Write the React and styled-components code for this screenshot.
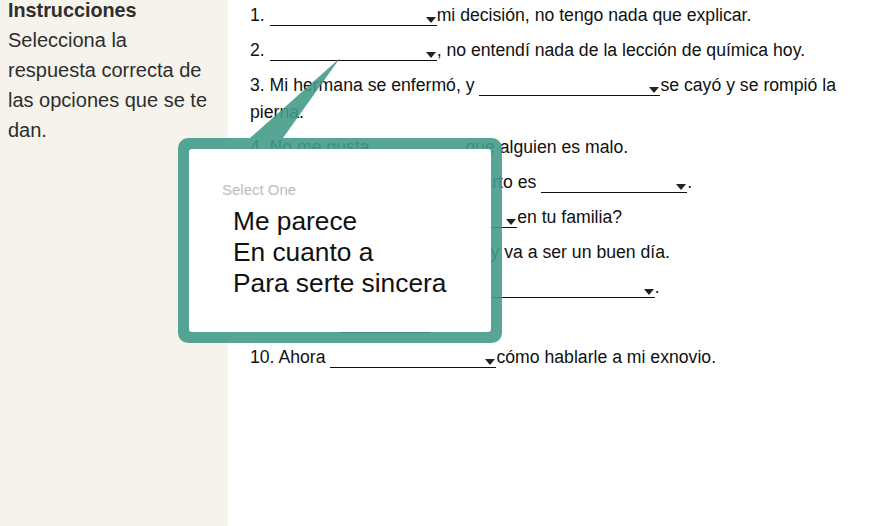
import styled, { createGlobalStyle } from "styled-components";

const GlobalStyle = createGlobalStyle`
  html, body {
    margin: 0;
    padding: 0;
    background: #fff;
    overflow: hidden;
  }
  body {
    font-family: "Liberation Sans", Arial, sans-serif;
  }
`;

const Page = styled.div`
  position: relative;
  display: flex;
  width: 100vw;
  height: 100vh;
`;

const Sidebar = styled.aside`
  flex: 0 0 228px;
  box-sizing: border-box;
  padding: 0 8px;
  background: #f5f3ec;
  color: #2e2e2e;
`;

const Heading = styled.h3`
  margin: 0 0 5px;
  font-size: 19.8px;
  line-height: 20px;
  font-weight: bold;
`;

const Instructions = styled.p`
  margin: 0;
  max-width: 205px;
  font-size: 20px;
  line-height: 30px;
`;

const Questions = styled.main`
  flex: 1;
  box-sizing: border-box;
  padding: 2px 20px 0 22px;
  color: #111;
  font-size: 17.65px;
`;

const Question = styled.div`
  line-height: 27px;
  margin-bottom: 8px;
`;

const Blank = styled.span`
  display: inline-flex;
  align-items: flex-end;
  justify-content: flex-end;
  box-sizing: border-box;
  width: ${(p) => p.$w}px;
  height: 16px;
  border-bottom: 1px solid #111;
  vertical-align: -2px;
`;

const Caret = styled.span`
  display: block;
  width: 0;
  height: 0;
  margin: 0 1px 2px 0;
  border-left: 5px solid transparent;
  border-right: 5px solid transparent;
  border-top: 6px solid #222;
`;

const Pointer = styled.svg`
  position: absolute;
  left: 250px;
  top: 58px;
  width: 90px;
  height: 80px;
  overflow: visible;
`;

const Popup = styled.div`
  position: absolute;
  left: 178px;
  top: 138px;
  width: 324px;
  height: 205px;
  box-sizing: border-box;
  padding: 11px;
  border-radius: 10px;
  background: rgba(68, 155, 137, 0.9);
`;

const PopupInner = styled.div`
  height: 100%;
  box-sizing: border-box;
  padding: 32px 0 0 44px;
  border-radius: 3px;
  background: #fff;
`;

const PopupLabel = styled.div`
  margin: 0 0 7px -11px;
  font-size: 15px;
  line-height: 18px;
  color: #bdbdbd;
`;

const Option = styled.div`
  font-size: 26.3px;
  line-height: 31px;
  color: #111;
`;

const Drop = ({ w }) => (
  <Blank $w={w}>
    <Caret />
  </Blank>
);

export default function App() {
  const teal = "rgba(68, 155, 137, 0.9)";

  return (
    <Page>
      <GlobalStyle />
      <Sidebar>
        <Heading>Instrucciones</Heading>
        <Instructions>
          Selecciona la respuesta correcta de las opciones que se te dan.
        </Instructions>
      </Sidebar>

      <Questions>
        <Question>
          1. <Drop w={167} />mi decisión, no tengo nada que explicar.
        </Question>
        <Question>
          2. <Drop w={167} />, no entendí nada de la lección de química hoy.
        </Question>
        <Question>
          3. Mi hermana se enfermó, y <Drop w={181} />se cayó y se rompió la pierna.
        </Question>
        <Question>
          4. No me gusta <Drop w={86} /> que alguien es malo.
        </Question>
        <Question>
          5. Después de todo esto, lo cierto es <Drop w={146} />.
        </Question>
        <Question>
          6. ¿Cómo va todo <Drop w={122} />en tu familia?
        </Question>
        <Question>
          7. <Drop w={162} /> que hoy va a ser un buen día.
        </Question>
        <Question>
          8. Lo que más me gusta es <Drop w={187} />.
        </Question>
        <Question>
          9. Siempre <Drop w={90} />, ya.
        </Question>
        <Question>
          10. Ahora <Drop w={166} />cómo hablarle a mi exnovio.
        </Question>
      </Questions>

      {/* callout for the open dropdown */}
      <Pointer viewBox="0 0 90 80">
        <polygon points="90,0 0,80 33,80" fill={teal} />
      </Pointer>
      <Popup>
        <PopupInner>
          <PopupLabel>Select One</PopupLabel>
          <Option>Me parece</Option>
          <Option>En cuanto a</Option>
          <Option>Para serte sincera</Option>
        </PopupInner>
      </Popup>
    </Page>
  );
}
